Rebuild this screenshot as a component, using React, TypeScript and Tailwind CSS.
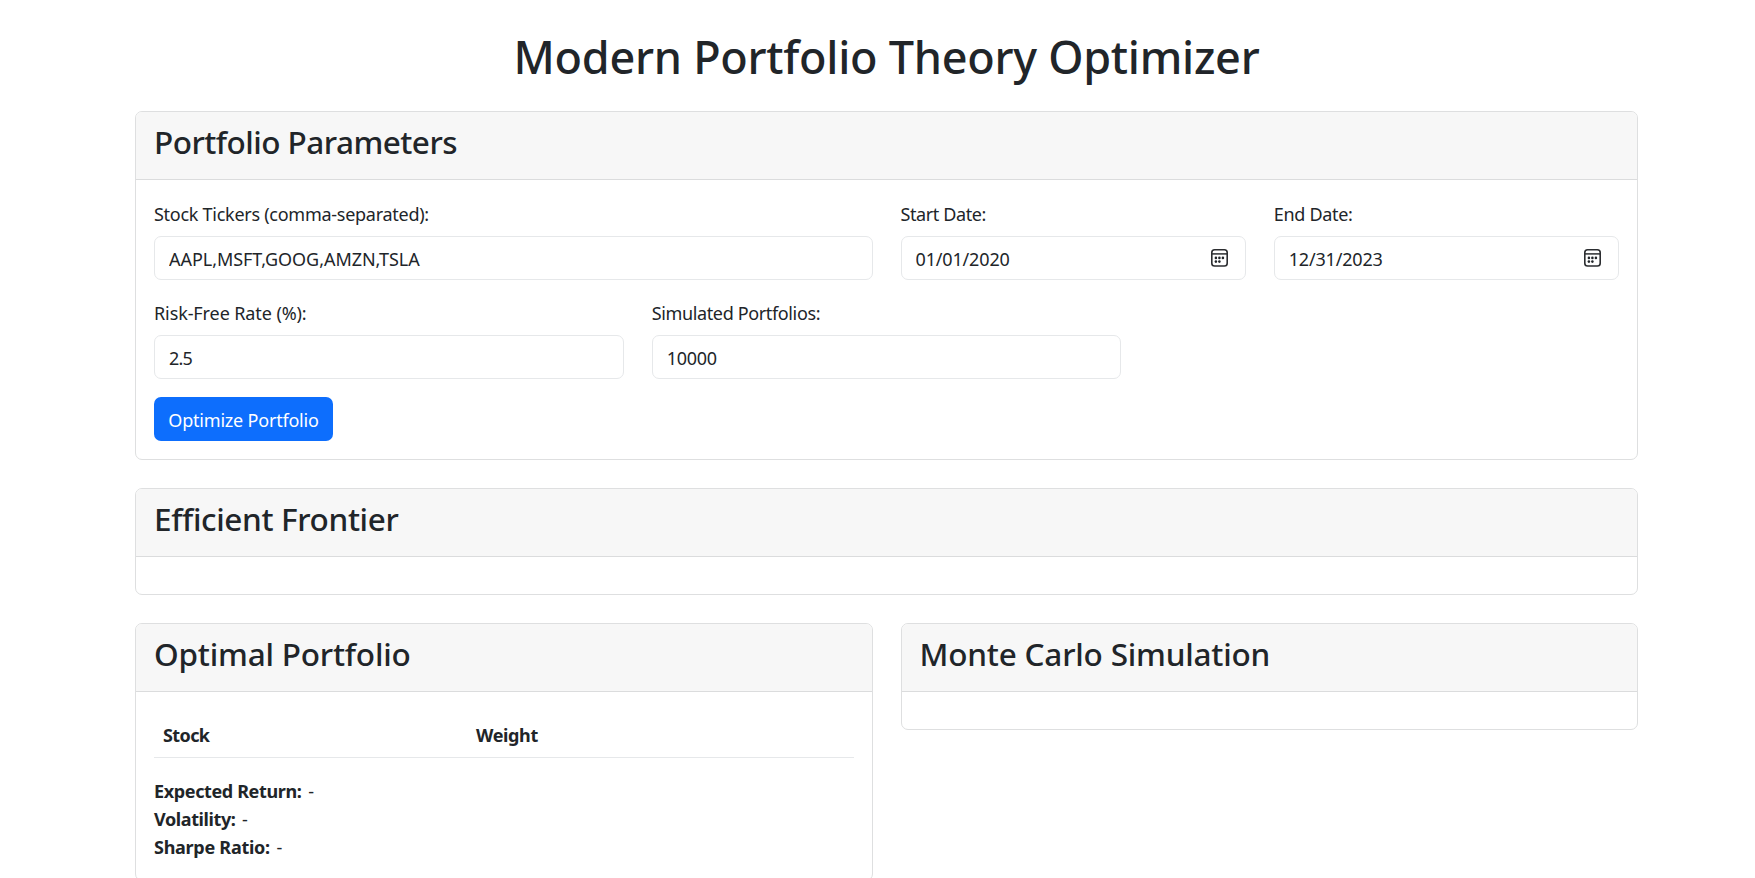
import React, { ReactNode, useState } from "react";

function CalendarIcon() {
  return (
    <svg className="h-[18px] w-[17px] shrink-0" viewBox="0 0 17 18" fill="none" stroke="#2b2d30">
      <rect x="0.8" y="0.8" width="15.4" height="16.2" rx="2.8" strokeWidth="1.6" />
      <path d="M1 4.9H16" strokeWidth="1.5" />
      <g fill="#212529" stroke="none">
        <circle cx="4.9" cy="8.9" r="1.3" />
        <circle cx="8.4" cy="8.9" r="1.3" />
        <circle cx="11.9" cy="8.9" r="1.3" />
        <circle cx="4.9" cy="12.6" r="1.3" />
        <circle cx="8.4" cy="12.6" r="1.3" />
      </g>
    </svg>
  );
}

function Card({ title, titleClass, children }: { title: string; titleClass: string; children?: ReactNode }) {
  return (
    <section className="rounded-[7px] border border-[#dedfe0] bg-white">
      <div className="h-[68px] rounded-t-[6px] border-b border-[#dbdcdd] bg-[#f7f7f7] px-[18px] pt-[10px]">
        <h2 className={`text-[31.5px] leading-[40px] font-medium ${titleClass}`}>{title}</h2>
      </div>
      {children ?? <div className="h-[37px]" />}
    </section>
  );
}

interface FieldProps {
  id: string;
  label: string;
  initial: string;
  className: string;
  labelClass: string;
  inputClass: string;
  calendar?: boolean;
}

function Field({ id, label, initial, className, labelClass, inputClass, calendar }: FieldProps) {
  const [value, setValue] = useState(initial);
  return (
    <div className={className}>
      <label htmlFor={id} className={`mb-[8px] block pt-px leading-[28px] ${labelClass}`}>
        {label}
      </label>
      <div className="flex h-[44px] items-center rounded-[7px] border border-[#e6e8ea] bg-white pr-[17px] pl-[14px]">
        <input
          id={id}
          value={value}
          onChange={(e) => setValue(e.target.value)}
          className={`h-[28px] min-w-0 flex-1 bg-transparent pt-px leading-[28px] outline-none ${inputClass}`}
        />
        {calendar && <CalendarIcon />}
      </div>
    </div>
  );
}

function Metric({ label, labelClass }: { label: string; labelClass: string }) {
  return (
    <p>
      <strong className={`mr-[2px] font-bold ${labelClass}`}>{label}</strong> -
    </p>
  );
}

export default function App() {
  return (
    <div className="h-[878px] overflow-hidden bg-white pt-[29px] pl-[135px] font-['Noto_Sans','Open_Sans',sans-serif] text-[18px] text-[#212529]">
      <main className="w-[1503px]">
        <h1 className="mb-[26px] text-center text-[45px] leading-[56px] font-medium tracking-[-0.27px]">
          Modern Portfolio Theory Optimizer
        </h1>

        <div className="flex flex-col gap-[28px]">
          <Card title="Portfolio Parameters" titleClass="tracking-[-0.52px]">
            <div className="h-[279px] px-[18px] pt-[19px]">
              <div className="grid grid-cols-12 gap-x-[28px]">
                <Field id="tickers" label="Stock Tickers (comma-separated):" initial="AAPL,MSFT,GOOG,AMZN,TSLA" className="col-span-6" labelClass="tracking-[-0.27px]" inputClass="tracking-[-0.05px]" />
                <Field id="start" label="Start Date:" initial="01/01/2020" className="col-span-3" labelClass="tracking-[-0.4px]" inputClass="tracking-[-0.16px]" calendar />
                <Field id="end" label="End Date:" initial="12/31/2023" className="col-span-3" labelClass="tracking-[-0.3px]" inputClass="tracking-[-0.18px]" calendar />
              </div>
              <div className="mt-[18px] grid grid-cols-12 gap-x-[28px]">
                <Field id="rate" label="Risk-Free Rate (%):" initial="2.5" className="col-span-4" labelClass="tracking-[-0.1px]" inputClass="tracking-[-0.8px]" />
                <Field id="count" label="Simulated Portfolios:" initial="10000" className="col-span-4" labelClass="tracking-[-0.36px]" inputClass="tracking-[-0.3px]" />
              </div>
              <button className="mt-[18px] flex h-[44px] w-[179px] items-center justify-center rounded-[7px] bg-[#0d6efd] pt-[3px] tracking-[-0.2px] text-white">
                Optimize Portfolio
              </button>
            </div>
          </Card>

          <Card title="Efficient Frontier" titleClass="tracking-[-0.36px]" />

          <div className="grid grid-cols-2 items-start gap-x-[28px]">
            <Card title="Optimal Portfolio" titleClass="tracking-[-0.2px]">
              <div className="px-[18px] pt-[19px] pb-[19px]">
                <table className="mb-[19px] w-full table-fixed border-collapse">
                  <thead>
                    <tr className="h-[46px] border-b border-[#e6e8ea] text-left font-bold">
                      <th className="w-[313px] pt-[2px] pl-[9px] leading-[28px] tracking-[-0.6px]">Stock</th>
                      <th className="pt-[2px] pl-[9px] leading-[28px] tracking-[-0.36px]">Weight</th>
                    </tr>
                  </thead>
                </table>
                <div className="leading-[28px]">
                  <Metric label="Expected Return:" labelClass="tracking-[-0.37px]" />
                  <Metric label="Volatility:" labelClass="tracking-[-0.4px]" />
                  <Metric label="Sharpe Ratio:" labelClass="tracking-[-0.27px]" />
                </div>
              </div>
            </Card>
            <Card title="Monte Carlo Simulation" titleClass="tracking-[-0.2px]" />
          </div>
        </div>
      </main>
    </div>
  );
}
